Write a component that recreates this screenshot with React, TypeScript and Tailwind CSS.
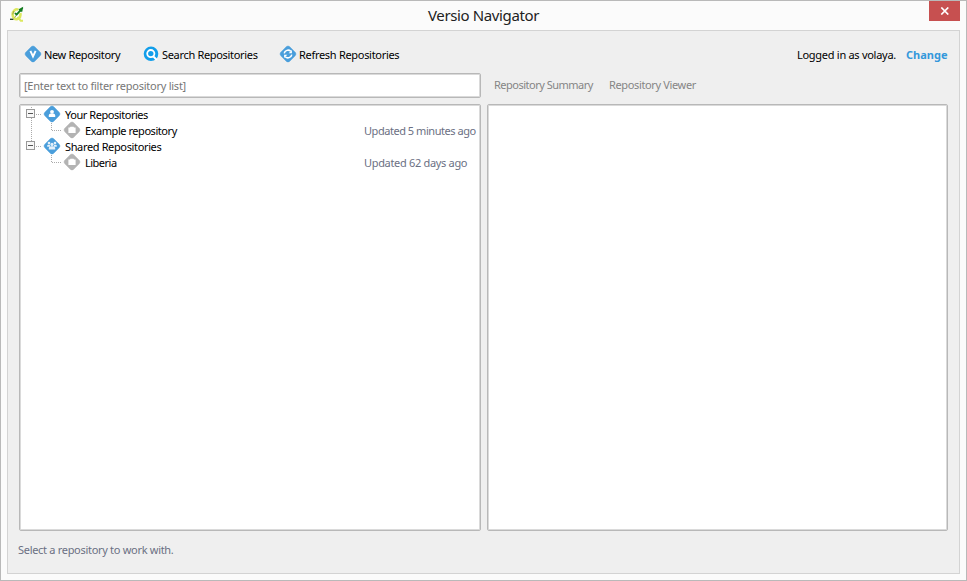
import React from "react";

const diamond = "M8 0Q9 0 9.8 .8L15.2 6.2Q17 8 15.2 9.8L9.8 15.2Q8 17 6.2 15.2L.8 9.8Q-1 8 .8 6.2L6.2 .8Q7 0 8 0Z";

function Diamond({ color, children }: { color: string; children: React.ReactNode }) {
  return (
    <svg viewBox="0 0 16 16" className="block h-4 w-4 shrink-0 overflow-visible">
      <path d={diamond} fill={color} stroke={color} strokeWidth=".4" />
      {children}
    </svg>
  );
}

function NewIcon() {
  return (
    <Diamond color="#4a9edb">
      <path d="M5.4 4.8L8 10.4L10.6 4.8" fill="none" stroke="#fff" strokeWidth="1.9" />
    </Diamond>
  );
}

function SearchIcon() {
  return (
    <svg viewBox="0 0 16 16" className="block h-4 w-4 shrink-0">
      <path d="M8 .5A7.3 7.3 0 1 1 8 15.1A7.3 7.3 0 0 1 8 .5Z" fill="#129eea" />
      <path d="M10.2 10.2L13.8 14" stroke="#fff" strokeWidth="2" />
      <circle cx="7.8" cy="7.6" r="3.6" fill="none" stroke="#fff" strokeWidth="1.8" />
    </svg>
  );
}

function RefreshIcon() {
  return (
    <Diamond color="#4a9edb">
      <path d="M4.2 7.4A3.9 3.9 0 0 1 10.8 5.3M11.8 8.6A3.9 3.9 0 0 1 5.2 10.7" fill="none" stroke="#fff" strokeWidth="1.5" />
      <path d="M11.9 4V7.2H8.7ZM4.1 12V8.8H7.3Z" fill="#fff" />
    </Diamond>
  );
}

function UserIcon() {
  return (
    <Diamond color="#4a9edb">
      <circle cx="8" cy="5.8" r="1.9" fill="#fff" />
      <path d="M4.8 11V9.6Q4.8 7.7 6.8 7.5H9.2Q11.2 7.7 11.2 9.6V11Z" fill="#fff" />
    </Diamond>
  );
}

function GroupIcon() {
  return (
    <Diamond color="#4a9edb">
      <g fill="#e3f0fa">
        <circle cx="5" cy="5" r="1.3" />
        <circle cx="11" cy="5" r="1.3" />
        <path d="M3.2 8.8V7.6Q3.4 6.8 4.2 6.8H6V8.8ZM12.8 8.8V7.6Q12.6 6.8 11.8 6.8H10V8.8Z" />
        <circle cx="8" cy="6.4" r="1.6" />
        <path d="M4.8 11.6V10Q5 8.4 6.8 8.2H9.2Q11 8.4 11.2 10V11.6Z" />
      </g>
    </Diamond>
  );
}

function RepoIcon() {
  return (
    <Diamond color="#b3b3b3">
      <path d="M4.4 5.4H6L6.4 4.8H9.6L10 5.4H11.6V11H4.4Z" fill="#fff" />
    </Diamond>
  );
}

function AppIcon() {
  return (
    <svg viewBox="0 0 16 16" className="block h-4 w-4">
      <path d="M9.4 3.6C6.4 2.4 3.6 5.2 3.6 8.6C3.6 11.8 6 13.8 8.4 13C10.8 12.2 11.8 9.6 11.4 7" fill="none" stroke="#dce85e" strokeWidth="2.6" />
      <path d="M8.6 11L11.8 14.8H14" fill="none" stroke="#dce85e" strokeWidth="2" />
      <path d="M4.9 5L3.6 8.4M7.4 9L5.8 11.6" stroke="#8f9845" strokeWidth=".8" />
      <path d="M1 13.3H4.4" stroke="#243e25" strokeWidth="1.3" />
      <path d="M6 7L8 9.2M7.6 8.6L13.6 1.8M10 4L13 2.4L12.4 5.6" fill="none" stroke="#147c20" strokeWidth="1.8" />
    </svg>
  );
}

function Tool({ icon, label, className }: { icon: React.ReactNode; label: string; className: string }) {
  return (
    <button className="flex h-[17px] items-start gap-[3px] text-black">
      {icon}
      <span className={className}>{label}</span>
    </button>
  );
}

function Expander({ last }: { last?: boolean }) {
  return (
    <svg viewBox="0 0 20 16" className="block h-4 w-5 shrink-0" shapeRendering="crispEdges">
      <path d={last ? "M7.5 0V3" : "M7.5 1V3M7.5 12V16"} stroke="#aaa" strokeDasharray="1 1" />
      <path d="M12 8.5H18" stroke="#aaa" strokeDasharray="1 1" />
      <rect x="2.5" y="3.5" width="8" height="8" fill="#f8f8f8" stroke="#999" />
      <path d="M4 7.5H9" stroke="#555" />
    </svg>
  );
}

function Branch({ through }: { through?: boolean }) {
  return (
    <svg viewBox="0 0 40 16" className="block h-4 w-10 shrink-0" shapeRendering="crispEdges">
      {through && <path d="M7.5 0V16" stroke="#aaa" strokeDasharray="1 1" />}
      <path d="M27.5 1V8.5H38" fill="none" stroke="#aaa" strokeDasharray="1 1" />
    </svg>
  );
}

const panel = "rounded-[2px] border border-[#b8b8b8] bg-white shadow-[inset_0_0_0_1px_#dadada]";

export default function App() {
  return (
    <div className="flex h-[581px] w-[967px] flex-col border border-[#b9b9b9] bg-[#fbfbfb] px-1.5 pb-1.5 font-['Noto_Sans',sans-serif] text-[11px] leading-4 whitespace-nowrap">
      <header className="flex h-[29px] shrink-0 items-start">
        <div className="w-[420px] pt-[5px] pl-0.5">
          <AppIcon />
        </div>
        <h1 className="h-[29px] flex-1 pt-[3px] pl-px text-[15px] leading-[23px] tracking-[-0.37px] text-[#222]">Versio Navigator</h1>
        <button className="flex h-5 w-[31px] items-center justify-center bg-[#c75050]" aria-label="Close">
          <svg viewBox="0 0 10 8" className="h-2 w-2.5">
            <path d="M1.3 .5L8.3 7.5M8.3 .5L1.3 7.5" stroke="#fff" strokeWidth="1.7" />
          </svg>
        </button>
      </header>
      <main className="flex h-[544px] w-[953px] shrink-0 flex-col border border-[#d3d3d3] bg-[#efefef] px-[11px]">
        <div className="flex h-[42px] shrink-0 items-start pt-[15px] pl-1.5">
          <div className="w-[118px]"><Tool icon={<NewIcon />} label="New Repository" className="pt-px tracking-[-0.36px]" /></div>
          <div className="w-[137px]"><Tool icon={<SearchIcon />} label="Search Repositories" className="pt-px tracking-[-0.32px]" /></div>
          <div className="flex-1"><Tool icon={<RefreshIcon />} label="Refresh Repositories" className="pt-px tracking-[-0.3px]" /></div>
          <span className="w-[109px] pt-px tracking-[-0.28px] text-black">Logged in as volaya.</span>
          <a className="w-[42px] pt-px font-bold tracking-[0px] text-[#3498db]">Change</a>
        </div>
        <div className="flex h-[25px] shrink-0 gap-1.5">
          <input
            className={`${panel} w-[462px] pl-1 text-[11px] tracking-[-0.25px] outline-none placeholder:text-[#777]`}
            placeholder="[Enter text to filter repository list]"
          />
          <nav className="flex pt-1 pl-[7px] text-[#858585]">
            <span className="w-[115px] tracking-[-0.5px]">Repository Summary</span>
            <span className="tracking-[-0.36px]">Repository Viewer</span>
          </nav>
        </div>
        <div className="mt-1.5 flex h-[427px] shrink-0 gap-1.5">
          <section className={`${panel} w-[462px] pt-px pl-1 text-black`}>
            <div className="flex h-4"><Expander /><UserIcon /><span className="pt-px pl-[5px] tracking-[-0.45px]">Your Repositories</span></div>
            <div className="flex h-4"><Branch through /><RepoIcon /><span className="w-[284px] pt-px pl-[5px] tracking-[-0.45px]">Example repository</span><span className="pt-px tracking-[-0.46px] text-[#6b7083]">Updated 5 minutes ago</span></div>
            <div className="flex h-4"><Expander last /><GroupIcon /><span className="pt-px pl-[5px] tracking-[-0.36px]">Shared Repositories</span></div>
            <div className="flex h-4"><Branch /><RepoIcon /><span className="w-[284px] pt-px pl-[5px] tracking-[-0.5px]">Liberia</span><span className="pt-px tracking-[-0.32px] text-[#6b7083]">Updated 62 days ago</span></div>
          </section>
          <section className={`${panel} w-[461px]`} />
        </div>
        <footer className="-ml-px pt-[11px] tracking-[-0.3px] text-[#6b7083]">Select a repository to work with.</footer>
      </main>
    </div>
  );
}
